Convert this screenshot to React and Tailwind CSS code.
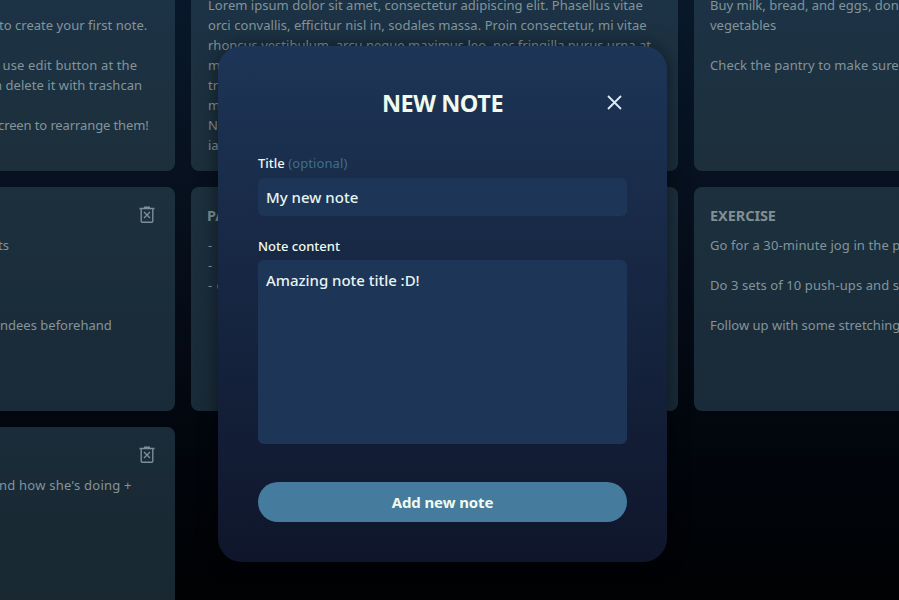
import React from "react";

function Trash() {
  return (
    <svg width="16" height="18" viewBox="0 0 16 18" fill="none" stroke="#7d8f98" className="block">
      <path d="M0.5 2.5H15.5M5 1.2H11" strokeWidth="1.4" />
      <path d="M2.2 2.5V15.2Q2.2 16.3 3.3 16.3H12.7Q13.8 16.3 13.8 15.2V2.5" strokeWidth="1.4" />
      <path d="M5 6L11 12M11 6L5 12" strokeWidth="1.4" />
    </svg>
  );
}

function Card({ title, trash, lines, tone }) {
  return (
    <article className={`h-[224px] overflow-hidden rounded-lg bg-linear-to-b p-4 ${tone}`}>
      <header className="flex h-6 items-center justify-between text-[14.5px] font-bold text-[#818f92]">
        <h2 className="pt-px tracking-[-0.08px]">{title}</h2>
        {trash && <span className="mr-1"><Trash /></span>}
      </header>
      <div className="mt-2 text-[13px] leading-5 text-[#83949a]">
        {lines.map(([text, cls], i) => (
          <p key={i} className={`h-5 whitespace-pre ${cls || ""}`}>{text}</p>
        ))}
      </div>
    </article>
  );
}

const top = "from-[#1c3449] to-[#1c2f3b]";
const middle = "from-[#1c303e] to-[#192a38]";
const bottom = "from-[#1a2c39] to-[#18262e]";

const cards = [
  {
    tone: top,
    lines: [
      [""],
      ["to create your first note.", "pl-[295px] tracking-[0.03px]"],
      [""],
      [" use edit button at the", "pl-[295px] tracking-[0.13px]"],
      ["n delete it with trashcan", "pl-[290px] tracking-[0.05px]"],
      [""],
      ["creen to rearrange them!", "pl-[294px] tracking-[-0.11px]"],
    ],
  },
  {
    tone: top,
    lines: [
      ["Lorem ipsum dolor sit amet, consectetur adipiscing elit. Phasellus vitae", "pl-px tracking-[0.035px]"],
      ["orci convallis, efficitur nisl in, sodales massa. Proin consectetur, mi vitae", "pl-px tracking-[0.05px]"],
      ["rhoncus vestibulum, arcu neque maximus leo, nec fringilla purus urna at", "pl-px"],
      ["mi. Sed", "pl-px"],
      ["tristique", "pl-px"],
      ["mauris", "pl-px"],
      ["Nulla", "pl-px"],
      ["iaculis", "pl-px"],
    ],
  },
  {
    tone: top,
    lines: [
      ["Buy milk, bread, and eggs, don't forget"],
      ["vegetables"],
      [""],
      ["Check the pantry to make sure", "tracking-[0.07px]"],
    ],
  },
  {
    tone: middle,
    trash: true,
    lines: [["ts", "pl-[294px]"], [""], [""], [""], ["ndees beforehand", "pl-[296px]"]],
  },
  {
    tone: middle,
    title: "PACKING",
    lines: [
      ["- clothes", "pl-px tracking-[1.2px]"],
      ["- shoes", "pl-px tracking-[1.2px]"],
      ["- charger", "pl-px tracking-[0.5px]"],
    ],
  },
  {
    tone: middle,
    title: "EXERCISE",
    lines: [
      ["Go for a 30-minute jog in the park", "tracking-[0.1px]"],
      [""],
      ["Do 3 sets of 10 push-ups and squats", "tracking-[0.09px]"],
      [""],
      ["Follow up with some stretching"],
    ],
  },
  { tone: bottom, trash: true, lines: [["nd how she's doing +", "pl-[295px] tracking-[0.22px]"]] },
];

export default function App() {
  return (
    <div className="grid h-[600px] w-[899px] overflow-hidden bg-linear-to-b from-[#08182a] via-[#060c17] via-50% to-[#000204] font-['Noto_Sans',sans-serif]">
      <main className="col-start-1 row-start-1 -mt-[53px] -ml-[312px] grid h-[653px] w-[1493px] grid-cols-[487px_487px_487px] content-start gap-4 overflow-hidden">
        {cards.map((c, i) => (
          <Card key={i} title={c.title || " "} trash={c.trash} lines={c.lines} tone={c.tone} />
        ))}
      </main>
      <section className="z-10 col-start-1 row-start-1 mt-[46px] ml-[218px] flex h-[516px] w-[449px] flex-col rounded-3xl bg-linear-to-b from-[#1d3557] to-[#0f162b] px-10 text-[#f1faee] shadow-[0_0_20px_rgba(0,0,0,0.5)]">
        <header className="mt-10 grid h-9 grid-cols-[1fr_auto_1fr] items-center">
          <h1 className="col-start-2 text-[23.5px] font-bold tracking-[-0.45px]">NEW NOTE</h1>
          <button className="mr-[5px] mb-1 justify-self-end" aria-label="Close">
            <svg width="15" height="15" viewBox="0 0 15 15" className="block" stroke="#dcecf1" strokeWidth="1.8">
              <path d="M1 1L14 14M14 1L1 14" />
            </svg>
          </button>
        </header>
        <label className="mt-[31px] h-5 text-[13px] leading-5 font-medium">
          <span>Title</span> <span className="font-normal tracking-[0.1px] text-[#406d8c]">(optional)</span>
        </label>
        <input defaultValue="My new note" className="mt-[5px] h-[38px] w-full rounded-md bg-[#1d3557] px-2 text-[15px] font-medium text-[#e6f4f1] outline-none" />
        <label className="mt-5 h-5 text-[13px] leading-5 font-medium">Note content</label>
        <textarea defaultValue="Amazing note title :D!" className="mt-1 h-[184px] w-full resize-none rounded-md bg-[#1d3557] px-2 py-[10px] text-[15px] leading-5 font-medium tracking-[-0.04px] text-[#e6f4f1] outline-none" />
        <button className="mt-[38px] h-10 w-full rounded-full bg-[#457b9d] text-[15px] font-bold tracking-[-0.12px]">Add new note</button>
      </section>
    </div>
  );
}
